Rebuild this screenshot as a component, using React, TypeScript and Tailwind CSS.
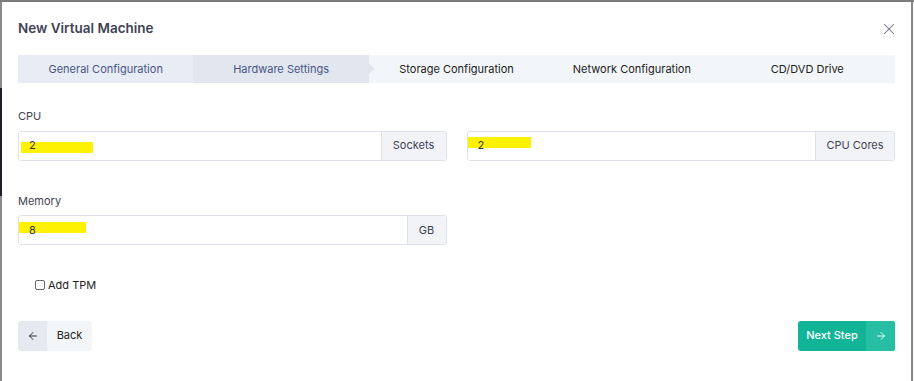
import { ArrowLeft, ArrowRight, X } from "lucide-react";

const font = { fontFamily: "Inter, 'Noto Sans', sans-serif" };

const tabs = [
  "General Configuration",
  "Hardware Settings",
  "Storage Configuration",
  "Network Configuration",
  "CD/DVD Drive",
];

function InputGroup({
  value,
  addon,
  addonWidth,
  marker,
}: {
  value: string;
  addon: string;
  addonWidth: string;
  marker: string;
}) {
  return (
    <div className="relative flex h-[30px] rounded-[3px] border border-[#dfe2ea]">
      <span className={`absolute h-[11px] bg-[#fff200] ${marker}`} />
      <div className="relative flex flex-1 items-center pl-[10px] text-[11px] text-[#333]">{value}</div>
      <div
        className={`flex ${addonWidth} items-center justify-center border-l border-[#dfe2ea] bg-[#f1f3f7] text-[11px] text-[#3f4254]`}
      >
        {addon}
      </div>
    </div>
  );
}

export default function App() {
  return (
    <div className="flex h-[381px] w-[914px] overflow-hidden bg-[#7b7b7b] pt-[2px]" style={font}>
      <div className="flex w-[2px] flex-col">
        <div className="h-[86px] bg-[#8a8a8a]" />
        <div className="h-[108px] bg-[#1e1e2d]" />
        <div className="flex-1 bg-[#8a8a8a]" />
      </div>
      <div className="flex w-[909px] flex-col bg-white px-[16px]">
        <div className="flex h-[53px] items-center justify-between">
          <h2 className="text-[13.5px] font-semibold text-[#3f4254]">New Virtual Machine</h2>
          <X className="mr-[-3px] h-[18px] w-[18px] text-[#6e7285]" strokeWidth={1.4} />
        </div>

        <div className="grid h-[28px] grid-cols-5 bg-[#f3f6f9] text-[11px]">
          {tabs.map((t, i) => (
            <div
              key={t}
              className={`relative flex items-center justify-center ${
                i === 0 ? "bg-[#e8edf5] text-[#4a5585]" : i === 1 ? "bg-[#e1e6ef] text-[#4a5585]" : "text-[#212121]"
              }`}
            >
              {t}
              {i === 1 && (
                <span className="absolute right-[-6px] top-[9px] h-0 w-0 border-y-[5px] border-l-[6px] border-y-transparent border-l-[#e1e6ef]" />
              )}
            </div>
          ))}
        </div>

        <div className="mt-[25px] grid grid-cols-2 gap-x-[20px]">
          <div>
            <div className="mb-[6px] text-[11px] text-[#3f4254]">CPU</div>
            <InputGroup value="2" addon="Sockets" addonWidth="w-[65px]" marker="left-[2px] top-[10px] w-[72px]" />
          </div>
          <div>
            <div className="invisible mb-[6px] text-[11px]">&nbsp;</div>
            <InputGroup value="2" addon="CPU Cores" addonWidth="w-[79px]" marker="left-[0px] top-[5px] w-[63px]" />
          </div>
        </div>

        <div className="mt-[32px] grid grid-cols-2 gap-x-[20px]">
          <div>
            <div className="mb-[6px] text-[11px] text-[#3f4254]">Memory</div>
            <InputGroup value="8" addon="GB" addonWidth="w-[39px]" marker="left-[0px] top-[6px] w-[67px]" />
          </div>
        </div>

        <label className="mt-[32px] ml-[17px] flex items-center gap-[3px] text-[11px] text-[#222]">
          <span className="h-[10px] w-[10px] rounded-[2px] border border-[#666] bg-white" />
          Add TPM
        </label>

        <div className="mt-[27px] flex justify-between">
          <button className="flex h-[30px] overflow-hidden rounded-[3px] bg-[#f3f6f9] text-[11px] text-[#222]">
            <span className="flex w-[29px] items-center justify-center bg-[#e6e9ef]">
              <ArrowLeft className="h-[12px] w-[12px]" strokeWidth={1.8} />
            </span>
            <span className="flex w-[45px] items-center justify-center">Back</span>
          </button>
          <button className="flex h-[30px] overflow-hidden rounded-[3px] bg-[#12b498] text-[11px] font-medium text-white">
            <span className="flex w-[68px] items-center justify-center">Next Step</span>
            <span className="flex w-[29px] items-center justify-center bg-[#26bfa4]">
              <ArrowRight className="h-[12px] w-[12px]" strokeWidth={1.8} />
            </span>
          </button>
        </div>
      </div>
      <div className="w-[2px] bg-[#8a8a8a]" />
      <div className="flex-1 bg-[#f4f4f4]" />
    </div>
  );
}
